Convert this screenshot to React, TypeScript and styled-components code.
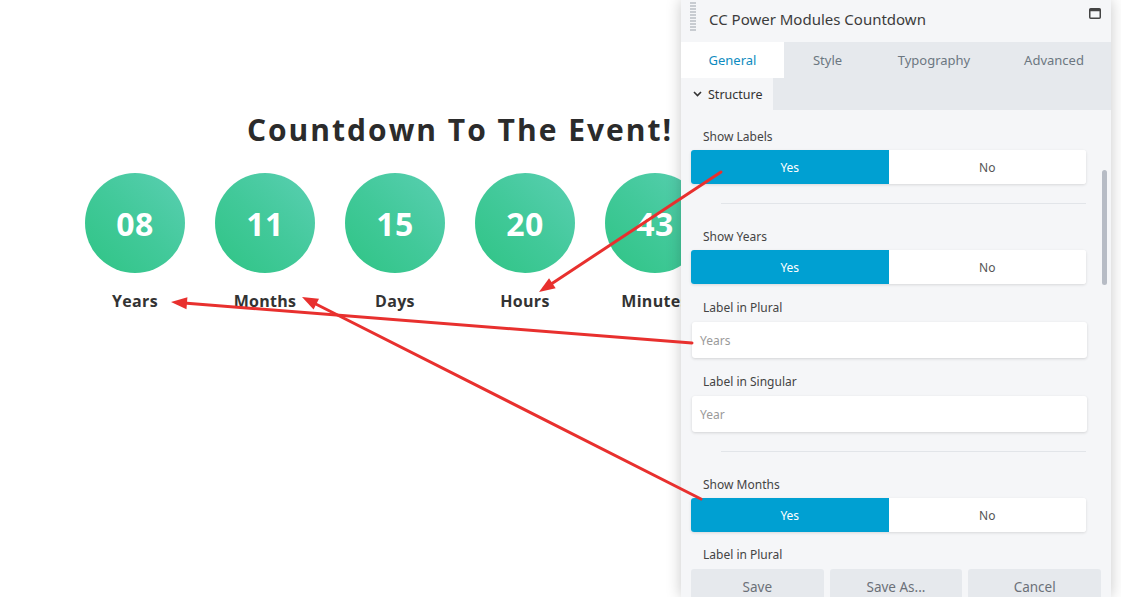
import React from "react";
import styled, { createGlobalStyle } from "styled-components";

const Global = createGlobalStyle`
  html, body { margin: 0; padding: 0; background: #fff; }
  body { width: 1121px; height: 597px; overflow: hidden; font-family: "Open Sans", "Noto Sans", sans-serif; }
  * { box-sizing: border-box; }
`;

const Stage = styled.div`
  position: relative;
  width: 1121px;
  height: 597px;
  overflow: hidden;
  background: #fff;
`;

const Canvas = styled.main`
  width: 920px;
  padding-top: 110px;
  display: flex;
  flex-direction: column;
  align-items: center;
`;

const Heading = styled.h1`
  margin: 0;
  font-family: "Open Sans", sans-serif;
  font-weight: 700;
  font-size: 30px;
  line-height: 40px;
  letter-spacing: 2px;
  color: #2b2b2b;
`;

const Units = styled.div`
  margin-top: 23px;
  display: flex;
  gap: 30px;
`;

const Unit = styled.div`
  width: 100px;
  display: flex;
  flex-direction: column;
  align-items: center;
`;

const Circle = styled.div`
  width: 100px;
  height: 100px;
  border-radius: 50%;
  background: linear-gradient(45deg, #2fc485 0%, #42c99a 50%, #5acfb2 100%);
  display: flex;
  align-items: center;
  justify-content: center;
  color: #fff;
  font-family: "Open Sans", sans-serif;
  font-weight: 700;
  font-size: 32px;
  letter-spacing: 0.5px;
`;

const UnitLabel = styled.div`
  margin-top: 19px;
  font-family: "Open Sans", sans-serif;
  font-weight: 700;
  font-size: 16px;
  line-height: 18px;
  color: #333;
  letter-spacing: 0.3px;
`;

const Panel = styled.aside`
  position: absolute;
  left: 681px;
  top: 0;
  width: 430px;
  height: 597px;
  background: #f5f6f8;
  box-shadow: 0 0 14px rgba(0, 0, 0, 0.22);
  display: flex;
  flex-direction: column;
  font-family: "Noto Sans", "Open Sans", sans-serif;
`;

const Header = styled.header`
  height: 42px;
  display: flex;
  align-items: center;
  padding: 0 10px 0 9px;
  background: #f5f6f8;
`;

const Handle = styled.div`
  width: 6px;
  height: 30px;
  margin-top: -8px;
  margin-right: 13px;
  background: repeating-linear-gradient(to bottom, #c8ccd1 0 2px, transparent 2px 3px);
`;

const Title = styled.div`
  flex: 1;
  font-size: 15px;
  color: #3c3c3c;
  margin-top: -4px;
`;

const Tabs = styled.nav`
  height: 36px;
  display: flex;
  background: #e6e9ed;
`;

const Tab = styled.div<{ $active?: boolean; $w: number }>`
  flex: 0 0 ${(p) => p.$w}px;
  display: flex;
  align-items: center;
  justify-content: center;
  font-size: 13px;
  color: ${(p) => (p.$active ? "#0e8bc0" : "#6c7781")};
  background: ${(p) => (p.$active ? "#fff" : "transparent")};
`;

const SectionBar = styled.div`
  height: 32px;
  display: flex;
  background: #e6e9ed;
`;

const SectionTab = styled.div`
  width: 92px;
  display: flex;
  align-items: center;
  gap: 6px;
  padding-left: 12px;
  background: #f5f6f8;
  font-size: 12.5px;
  color: #333;
`;

const Body = styled.div`
  position: relative;
  flex: 1;
  overflow: hidden;
  padding: 19px 25px 0 10px;
`;

const Scrollbar = styled.div`
  position: absolute;
  right: 4px;
  top: 60px;
  width: 5px;
  height: 115px;
  border-radius: 3px;
  background: #b7bcc5;
`;

const Field = styled.div<{ $gap?: number }>`
  display: flex;
  flex-direction: column;
  margin-top: ${(p) => p.$gap ?? 0}px;
`;

const FieldLabel = styled.div`
  font-size: 12px;
  color: #444;
  line-height: 16px;
  padding-left: 12px;
  margin-bottom: 5px;
`;

const Toggle = styled.div`
  display: flex;
  height: 34px;
  border-radius: 3px;
  overflow: hidden;
  background: #fff;
  box-shadow: 0 1px 3px rgba(0, 0, 0, 0.12);
`;

const ToggleOption = styled.div<{ $on?: boolean }>`
  flex: 1;
  display: flex;
  align-items: center;
  justify-content: center;
  font-size: 12px;
  color: ${(p) => (p.$on ? "#fff" : "#555")};
  background: ${(p) => (p.$on ? "#00a0d2" : "#fff")};
`;

const TextInput = styled.div`
  height: 36px;
  margin: 1px -1px 0 1px;
  display: flex;
  align-items: center;
  padding-left: 8px;
  border-radius: 3px;
  background: #fff;
  box-shadow: 0 1px 3px rgba(0, 0, 0, 0.14);
  font-size: 12px;
  color: #9a9a9a;
`;

const Divider = styled.hr`
  border: 0;
  border-top: 1px solid #e2e5e9;
  margin: 19px 0 25px 30px;
`;

const Footer = styled.footer`
  position: absolute;
  left: 0;
  right: 0;
  bottom: 0;
  height: 28px;
  display: grid;
  grid-template-columns: 1fr 1fr 1fr;
  gap: 6px;
  padding: 0 10px;
`;

const FooterButton = styled.div`
  display: flex;
  align-items: flex-start;
  justify-content: center;
  padding-top: 9px;
  border-radius: 3px 3px 0 0;
  background: #e6e9ed;
  font-size: 13.5px;
  color: #6b7078;
`;

const Arrows = styled.svg`
  position: absolute;
  left: 0;
  top: 0;
  pointer-events: none;
`;

function Arrow({ x1, y1, x2, y2 }: { x1: number; y1: number; x2: number; y2: number }) {
  const ang = Math.atan2(y2 - y1, x2 - x1);
  const len = 16;
  const w = 6;
  const bx = x2 - len * Math.cos(ang);
  const by = y2 - len * Math.sin(ang);
  const px = -Math.sin(ang) * w;
  const py = Math.cos(ang) * w;
  return (
    <g>
      <line x1={x1} y1={y1} x2={bx} y2={by} stroke="#e8302e" strokeWidth={3} strokeLinecap="round" />
      <polygon points={`${x2},${y2} ${bx + px},${by + py} ${bx - px},${by - py}`} fill="#e8302e" />
    </g>
  );
}

const units = [
  ["08", "Years"],
  ["11", "Months"],
  ["15", "Days"],
  ["20", "Hours"],
  ["43", "Minutes"],
  ["12", "Seconds"],
];

function YesNo() {
  return (
    <Toggle>
      <ToggleOption $on>Yes</ToggleOption>
      <ToggleOption>No</ToggleOption>
    </Toggle>
  );
}

export default function App() {
  return (
    <Stage>
      <Global />
      <Canvas>
        <Heading>Countdown To The Event!</Heading>
        <Units>
          {units.map(([n, l]) => (
            <Unit key={l}>
              <Circle>{n}</Circle>
              <UnitLabel>{l}</UnitLabel>
            </Unit>
          ))}
        </Units>
      </Canvas>

      <Panel>
        <Header>
          <Handle />
          <Title>CC Power Modules Countdown</Title>
          <svg width="12" height="12" viewBox="0 0 12 12" style={{ marginTop: -14 }}>
            <rect x="0.75" y="0.75" width="10.5" height="9.5" rx="1" fill="none" stroke="#444" strokeWidth="1.5" />
            <rect x="0.75" y="0.75" width="10.5" height="2.5" fill="#444" />
          </svg>
        </Header>
        <Tabs>
          <Tab $active $w={103}>General</Tab>
          <Tab $w={87}>Style</Tab>
          <Tab $w={126}>Typography</Tab>
          <Tab $w={114}>Advanced</Tab>
        </Tabs>
        <SectionBar>
          <SectionTab>
            <svg width="9" height="6" viewBox="0 0 9 6">
              <path d="M1 1 L4.5 4.5 L8 1" fill="none" stroke="#333" strokeWidth="1.6" />
            </svg>
            Structure
          </SectionTab>
        </SectionBar>
        <Body>
          <Scrollbar />
          <Field>
            <FieldLabel>Show Labels</FieldLabel>
            <YesNo />
          </Field>
          <Divider />
          <Field>
            <FieldLabel>Show Years</FieldLabel>
            <YesNo />
          </Field>
          <Field $gap={16}>
            <FieldLabel>Label in Plural</FieldLabel>
            <TextInput>Years</TextInput>
          </Field>
          <Field $gap={16}>
            <FieldLabel>Label in Singular</FieldLabel>
            <TextInput>Year</TextInput>
          </Field>
          <Divider />
          <Field>
            <FieldLabel>Show Months</FieldLabel>
            <YesNo />
          </Field>
          <Field $gap={15}>
            <FieldLabel>Label in Plural</FieldLabel>
          </Field>
          <Footer>
            <FooterButton>Save</FooterButton>
            <FooterButton>Save As...</FooterButton>
            <FooterButton>Cancel</FooterButton>
          </Footer>
        </Body>
      </Panel>

      <Arrows width="1121" height="597" viewBox="0 0 1121 597">
        <Arrow x1={721} y1={172} x2={539} y2={292} />
        <Arrow x1={692} y1={343} x2={171} y2={302} />
        <Arrow x1={701} y1={499} x2={302} y2={297} />
      </Arrows>
    </Stage>
  );
}
